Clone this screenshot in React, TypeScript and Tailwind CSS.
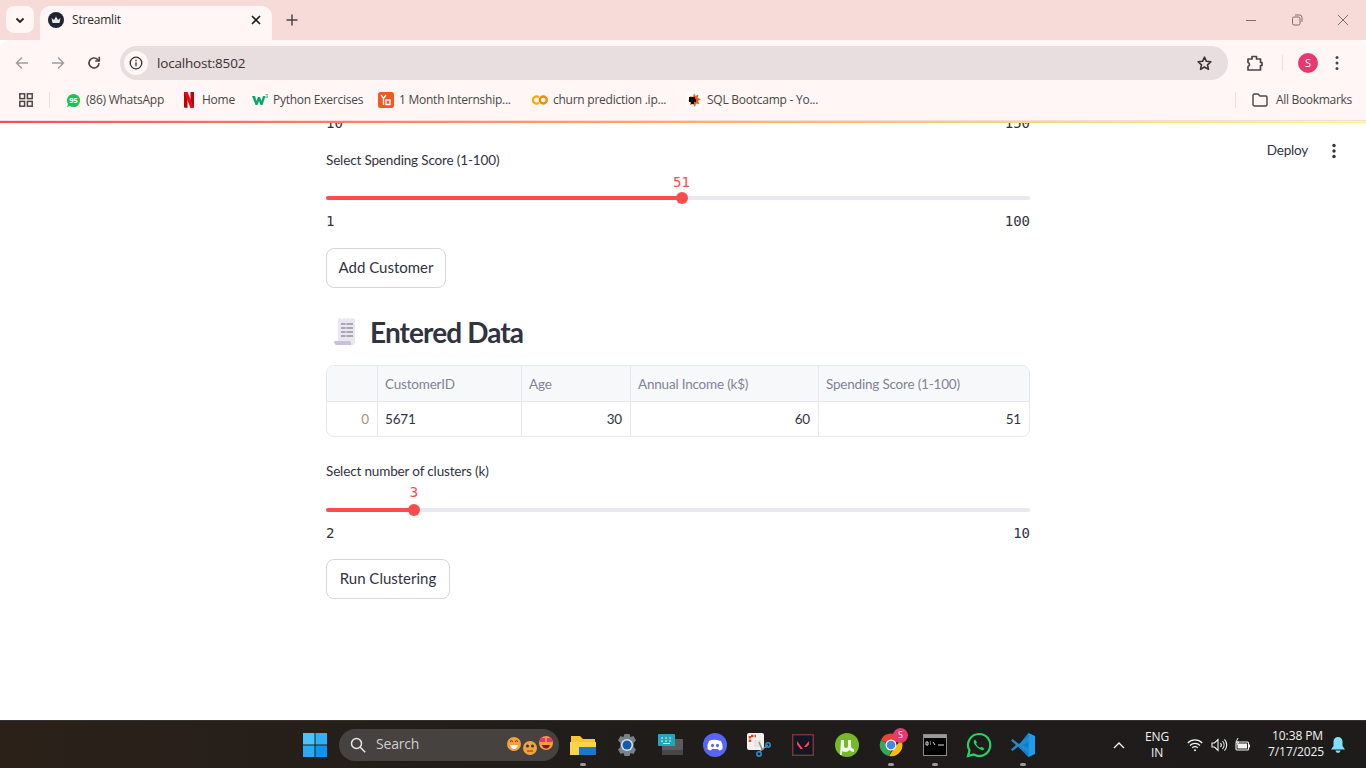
import React from "react";

const ui = { fontFamily: '"Open Sans", "Noto Sans", sans-serif' };
const st = { fontFamily: 'Lato, "Noto Sans", sans-serif' };
const mono = { fontFamily: '"DejaVu Sans Mono", "Liberation Mono", monospace' };

function Bookmark({ icon, label, w }: { icon: React.ReactNode; label: string; w: number }) {
  return (
    <div className="flex items-center shrink-0" style={{ width: w }}>
      <span className="w-4 h-4 flex items-center justify-center shrink-0">{icon}</span>
      <span className="ml-[5px] text-[12px] text-[#474747] whitespace-nowrap tracking-[-0.25px]">{label}</span>
    </div>
  );
}

function Slider({ label, value, pct, min, max, mt, gap, valueTop }: { label: string; value: string; pct: number; min: string; max: string; mt: string; gap: string; valueTop: string }) {
  return (
    <div className={mt}>
      <div className="h-[22px] text-[13.5px] leading-[24px] tracking-[-0.15px] text-[#31333f]" style={st}>{label}</div>
      <div className={`relative h-[4px] ${gap} rounded-full bg-[#e6e9ef]`}>
        <div className="h-full rounded-full bg-[#ff4b4b]" style={{ width: `${pct}%` }} />
        <div className="absolute top-[-4px] w-3 h-3 rounded-full bg-[#ff4b4b]" style={{ left: `calc(${pct}% - 6px)` }} />
        <div className={`absolute ${valueTop} w-10 text-center text-[14px] leading-[20px] text-[#ff4b4b]`} style={{ ...mono, left: `calc(${pct}% - 20px)` }}>{value}</div>
      </div>
      <div className="flex justify-between mt-[11px] text-[14px] leading-[20px] text-[#31333f]" style={mono}>
        <span>{min}</span>
        <span>{max}</span>
      </div>
    </div>
  );
}

function StButton({ children, w, mt }: { children: React.ReactNode; w: string; mt: string }) {
  return (
    <button className={`block h-10 pb-[2px] ${w} ${mt} rounded-lg border border-[#d5d6d9] bg-white text-[15px] text-[#31333f]`} style={st}>
      {children}
    </button>
  );
}

function Th({ w, children }: { w: string; children?: React.ReactNode }) {
  return <div className={`${w} shrink-0 h-full flex items-center pt-[2px] pl-[7px] pr-2 border-r border-[#e6e8ee] last:border-r-0 text-[13.5px] tracking-[-0.2px] text-[#808495]`}>{children}</div>;
}
function Td({ w, right, muted, children }: { w: string; right?: boolean; muted?: boolean; children?: React.ReactNode }) {
  return (
    <div className={`${w} shrink-0 h-full flex items-center pl-[7px] pr-2 border-r border-[#e6e8ee] last:border-r-0 text-[13.5px] tracking-[-0.2px] ${right ? "justify-end" : ""} ${muted ? "text-[#a0917f]" : "text-[#31333f]"}`}>
      {children}
    </div>
  );
}

function TaskIcon({ children, dot }: { children: React.ReactNode; dot?: boolean }) {
  return (
    <div className="relative w-11 h-12 flex items-center justify-center shrink-0">
      {children}
      {dot && <span className="absolute bottom-[3px] left-[19px] w-[6px] h-[3px] rounded-full bg-[#9a9a9a]" />}
    </div>
  );
}

export default function App() {
  return (
    <div className="relative w-[1366px] h-[768px] overflow-hidden flex flex-col bg-white" style={ui}>
      <div className="absolute z-10 top-[120px] left-0 right-0 h-[3px] border-t border-[#f7dbd8] bg-linear-to-r from-[#ff4b4b] to-[#fffd80]" />

      {/* Tab strip */}
      <div className="h-10 shrink-0 bg-[#f7dbd8] flex items-end">
        <div className="w-[28px] h-[27px] ml-[6px] mb-[7px] rounded-lg bg-[#fff6f5] flex items-center justify-center">
          <svg width="12" height="12" viewBox="0 0 12 12" fill="none" stroke="#1f1f1f" strokeWidth="1.8"><path d="M2.5 4.5 6 8l3.5-3.5" /></svg>
        </div>
        <div className="w-[232px] h-[34px] ml-[6px] pb-[6px] rounded-t-[10px] bg-[#fff6f5] flex items-center pl-[8px] pr-[10px]">
          <svg width="16" height="16" viewBox="0 0 16 16">
            <circle cx="8" cy="8" r="8" fill="#1f2430" />
            <path d="M3.5 6 6 8l2-3.5L10 8l2.500-2-1 5h-7z" fill="#e8e8e8" />
          </svg>
          <span className="ml-[8px] text-[12px] text-[#2a2a2a] tracking-[-0.2px]">Streamlit</span>
          <svg className="ml-auto" width="12" height="12" viewBox="0 0 12 12" stroke="#1f1f1f" strokeWidth="1.6"><path d="M2 2l8 8M10 2l-8 8" /></svg>
        </div>
        <div className="w-10 h-[34px] pb-[6px] flex items-center justify-center">
          <svg width="12" height="12" viewBox="0 0 12 12" stroke="#474747" strokeWidth="1.5"><path d="M6 .5v11M.5 6h11" /></svg>
        </div>
        <div className="ml-auto h-10 flex items-center">
          <div className="w-[46px] flex justify-center">
            <svg width="12" height="12" viewBox="0 0 12 12" stroke="#7d6f6e" strokeWidth="1"><path d="M1 6.500h10" /></svg>
          </div>
          <div className="w-[46px] flex justify-center">
            <svg width="12" height="12" viewBox="0 0 12 12" fill="none" stroke="#7d6f6e" strokeWidth="1"><rect x="1.500" y="3" width="7.500" height="8" rx="1.500" /><path d="M4 1h4.500A2.500 2.500 0 0 1 11 3.500V8" /></svg>
          </div>
          <div className="w-[46px] flex justify-center">
            <svg width="12" height="12" viewBox="0 0 12 12" stroke="#7d6f6e" strokeWidth="1"><path d="M1 1l10 10M11 1 1 11" /></svg>
          </div>
        </div>
      </div>

      {/* Toolbar */}
      <div className="h-[46px] shrink-0 bg-[#fff6f5] rounded-t-[8px] flex items-center">
        <div className="w-[44px] flex justify-center">
          <svg width="16" height="16" viewBox="0 0 16 16" fill="none" stroke="#a59b9a" strokeWidth="1.5"><path d="M14 8H2.500M8 2.500 2.500 8 8 13.500" /></svg>
        </div>
        <div className="w-[28px] flex justify-center">
          <svg width="16" height="16" viewBox="0 0 16 16" fill="none" stroke="#a59b9a" strokeWidth="1.5"><path d="M2 8h11.500M8 2.500 13.500 8 8 13.500" /></svg>
        </div>
        <div className="w-[44px] flex justify-center">
          <svg width="16" height="16" viewBox="0 0 16 16" fill="none" stroke="#4f4443" strokeWidth="1.600"><path d="M13 8a5 5 0 1 1-1.500-3.600L13 6" /><path d="M13.300 1.800V6H9.200" /></svg>
        </div>
        <div className="w-[1108px] h-[34px] ml-[4px] rounded-full bg-[#e8dddf] flex items-center pl-[4px] pr-[15px]">
          <span className="w-6 h-6 rounded-full bg-[#fff6f5] flex items-center justify-center">
            <svg width="14" height="14" viewBox="0 0 14 14" fill="none" stroke="#3c3130" strokeWidth="1.300"><circle cx="7" cy="7" r="5.800" /><path d="M7 6.200v4M7 3.800v1.400" /></svg>
          </span>
          <span className="ml-[9px] text-[13.500px] text-[#3c3130] tracking-[-0.2px]">localhost:8502</span>
          <svg className="ml-auto" width="17" height="17" viewBox="0 0 24 24" fill="none" stroke="#3c3130" strokeWidth="2.200" strokeLinejoin="round"><path d="m12 3 2.700 5.900 6.300.700-4.700 4.300 1.300 6.300L12 17l-5.600 3.200 1.300-6.300L3 9.600l6.300-.7z" /></svg>
        </div>
        <div className="w-[54px] flex justify-center">
          <svg width="18" height="18" viewBox="0 0 18 18" fill="none" stroke="#4f4443" strokeWidth="1.700" strokeLinejoin="round"><path d="M2 5h4V2.500h4.500V5h4v3.500H16v3h-1.500V16H2v-3.500c2-.5 2-3.500 0-4z" /></svg>
        </div>
        <div className="w-px h-4 bg-[#f7dbd8]" />
        <div className="w-[20px] h-[20px] ml-[15px] rounded-full bg-[#e8386f] flex items-center justify-center text-white text-[11px]">S</div>
        <div className="ml-[17px]">
          <svg width="4" height="16" viewBox="0 0 4 16" fill="#4f4443"><circle cx="2" cy="2.500" r="1.500" /><circle cx="2" cy="8" r="1.500" /><circle cx="2" cy="13.500" r="1.500" /></svg>
        </div>
      </div>

      {/* Bookmarks */}
      <div className="h-[36px] shrink-0 bg-[#fff6f5] flex items-center pb-[8px]">
        <div className="w-[52px] flex justify-center">
          <svg width="14" height="14" viewBox="0 0 14 14" fill="none" stroke="#4f4443" strokeWidth="1.500"><rect x=".8" y=".8" width="4.800" height="4.800" /><rect x="8.400" y=".8" width="4.800" height="4.800" /><rect x=".8" y="8.400" width="4.800" height="4.800" /><rect x="8.400" y="8.400" width="4.800" height="4.800" /></svg>
        </div>
        <div className="w-px h-4 bg-[#f7dbd8] -ml-[3px] mr-[15px]" />
        <Bookmark w={116} label="(86) WhatsApp" icon={
          <svg width="15" height="15" viewBox="0 0 16 16"><circle cx="8" cy="8" r="7" fill="#16c45a" /><path d="M1 15l1.500-4 2.500 2.500z" fill="#16c45a" /><text x="8" y="10.800" textAnchor="middle" fontSize="8" fontWeight="700" fill="#fff">95</text></svg>
        } />
        <Bookmark w={71} label="Home" icon={
          <svg width="12" height="16" viewBox="0 0 12 16"><path d="M1 0h3.500v16L1 15.500z" fill="#b1060f" /><path d="M7.500 0H11v15.500L7.500 16z" fill="#b1060f" /><path d="M1 0h3.500L11 15.500 7.500 16z" fill="#e50914" /></svg>
        } />
        <Bookmark w={126} label="Python Exercises" icon={
          <svg width="16" height="12" viewBox="0 0 16 12"><path d="M0 2h3l1.500 5L6 3h2l1.500 4L11 2h2.500L10.500 11h-2L7 7l-1.500 4h-2z" fill="#04aa6d" /><path d="M13.500.5h2v.6l-1 .9h1v1.500h-2" fill="none" stroke="#04aa6d" strokeWidth=".6" /></svg>
        } />
        <Bookmark w={154} label="1 Month Internship..." icon={
          <svg width="16" height="16" viewBox="0 0 16 16"><rect width="16" height="16" rx="2.500" fill="#f4581f" /><path d="M3 3l2.500 3.500L8 3M5.500 6.500V13M8 8h4v4.500H8z" fill="none" stroke="#fff" strokeWidth="1.300" /></svg>
        } />
        <Bookmark w={154} label="churn prediction .ip..." icon={
          <svg width="16" height="10" viewBox="0 0 16 10" fill="none" stroke="#f9ab00" strokeWidth="2.300"><path d="M7 2.300a3.600 3.600 0 1 0 0 5.400" /><circle cx="11.300" cy="5" r="3.500" stroke="#f58a07" /></svg>
        } />
        <Bookmark w={140} label="SQL Bootcamp - Yo..." icon={
          <svg width="16" height="16" viewBox="0 0 16 16"><rect width="16" height="16" fill="#fff" /><path d="M8 1l1.500 3 3-1.500L11.500 6 15 7l-3 2 1.500 3-3.500-.5L9 15l-2-3-3 1 .5-3L2 8l3-1-1-3 3 1z" fill="#f25a1d" /><path d="M3 5h6v2h1v3H8v2H5v-2H3z" fill="#111" /></svg>
        } />
        <div className="ml-auto flex items-center">
          <div className="w-px h-4 bg-[#f7dbd8] mr-[16px]" />
          <svg width="16" height="14" viewBox="0 0 16 14" fill="none" stroke="#4f4443" strokeWidth="1.400"><path d="M1 2.500A1.500 1.500 0 0 1 2.500 1h3.500L8 3h6A1.500 1.500 0 0 1 15 4.500v7a1.500 1.500 0 0 1-1.500 1.500h-11A1.500 1.500 0 0 1 1 11.500z" /></svg>
          <span className="ml-[8px] mr-[14px] text-[12px] text-[#474747] tracking-[-0.3px]">All Bookmarks</span>
        </div>
      </div>

      {/* Page */}
      <div className="relative flex-1 overflow-hidden bg-white">
        <div className="absolute top-[18px] right-[58px] text-[13.5px] tracking-[-0.2px] text-[#31333f]" style={st}>Deploy</div>
        <div className="absolute top-[21px] right-[30px]">
          <svg width="4" height="16" viewBox="0 0 4 16" fill="#31333f"><circle cx="2" cy="2.500" r="1.700" /><circle cx="2" cy="8" r="1.700" /><circle cx="2" cy="13.500" r="1.700" /></svg>
        </div>

        <div className="w-[704px] ml-[326px] -mt-[9px]" style={st}>
          <div className="flex justify-between h-[20px] text-[14px] leading-[20px] text-[#31333f]" style={mono}>
            <span>10</span>
            <span>150</span>
          </div>
          <Slider mt="mt-[15px]" gap="mt-[26px]" valueTop="top-[-24px]" label="Select Spending Score (1-100)" value="51" pct={50.5} min="1" max="100" />
          <StButton w="w-[120px]" mt="mt-[17px]">Add Customer</StButton>

          <div className="flex items-center h-[38px] mt-[25px]">
            <svg width="28" height="30" viewBox="0 0 28 30" className="ml-[5px]">
              <path d="M7 2l2-1 2 1 2-1 2 1 2-1 2 1 2-1 2 1 1-1v23q0 4-3 4H9q-2 0-2-2z" fill="#ebe7f1" />
              <path d="M3 24h16q1 0 1 4H6q-3 0-3-4z" fill="#c9bfe0" />
              <path d="M10 6h12v2H10zM10 10h12v2H10zM10 14h12v2H10zM10 18h12v2H10z" fill="#a8a5b5" />
              <path d="M15 6v14" stroke="#ebe7f1" strokeWidth=".8" />
            </svg>
            <h2 className="ml-[11px] text-[28px] font-bold text-[#31333f] tracking-[-0.9px]">Entered Data</h2>
          </div>

          <div className="mt-[14px] h-[72px] rounded-lg border border-[#e6e8ee] overflow-hidden">
            <div className="flex h-[36px] bg-[#f7f8fa] border-b border-[#e6e8ee]">
              <Th w="w-[51px]" />
              <Th w="w-[144px]">CustomerID</Th>
              <Th w="w-[109px]">Age</Th>
              <Th w="w-[188px]">Annual Income (k$)</Th>
              <Th w="flex-1">Spending Score (1-100)</Th>
            </div>
            <div className="flex h-[34px]">
              <Td w="w-[51px]" right muted>0</Td>
              <Td w="w-[144px]">5671</Td>
              <Td w="w-[109px]" right>30</Td>
              <Td w="w-[188px]" right>60</Td>
              <Td w="flex-1" right>51</Td>
            </div>
          </div>

          <Slider mt="mt-[22px]" gap="mt-[27px]" valueTop="top-[-26px]" label="Select number of clusters (k)" value="3" pct={12.5} min="2" max="10" />
          <StButton w="w-[124px]" mt="mt-[16px]">Run Clustering</StButton>
        </div>
      </div>

      {/* Taskbar */}
      <div className="h-12 shrink-0 border-t border-[#35322f] bg-linear-to-r from-[#2b2119] via-[#1f1c1a] to-[#1e1c1b] flex items-center text-white">
        <div className="w-11 ml-[293px] flex justify-center">
          <svg width="24" height="24" viewBox="0 0 24 24">
            <rect x="0" y="0" width="11.500" height="11.500" fill="#4cc2ff" />
            <rect x="12.500" y="0" width="11.500" height="11.500" fill="#2fb1fa" />
            <rect x="0" y="12.500" width="11.500" height="11.500" fill="#2aa9f5" />
            <rect x="12.500" y="12.500" width="11.500" height="11.500" fill="#0f93f0" />
          </svg>
        </div>
        <div className="w-[220px] h-8 ml-[2px] rounded-full bg-[#45423f] flex items-center pl-[11px]">
          <svg width="16" height="16" viewBox="0 0 16 16" fill="none" stroke="#e8e8e8" strokeWidth="1.500"><circle cx="6.500" cy="6.500" r="5" /><path d="m10.200 10.200 5 5" /></svg>
          <span className="ml-[10px] pb-[2px] text-[14px] text-[#cfcfcf] tracking-[-0.2px]">Search</span>
          <svg className="ml-auto mr-[5px]" width="48" height="24" viewBox="0 0 48 24">
            <circle cx="8" cy="11" r="7" fill="#f9a03c" /><path d="M4 12h8q-1 4-4 4t-4-4z" fill="#fff" /><path d="M4 8.500q1.500-1.500 3 0M9 8.500q1.500-1.500 3 0" stroke="#5b2a10" fill="none" />
            <circle cx="24" cy="15" r="7" fill="#f2a23f" /><circle cx="21.500" cy="13" r="1.500" fill="#333" /><circle cx="26.500" cy="13" r="1.500" fill="#333" /><path d="M21 18h6" stroke="#7a3c10" />
            <circle cx="40" cy="10" r="7" fill="#f99b3a" /><path d="M34 5h5v4h-5zM41 5h5v4h-5z" fill="#ee2f6a" /><path d="M36 12h8q-1 3.500-4 3.500T36 12z" fill="#7a1a24" />
          </svg>
        </div>
        <div className="ml-[2px] flex items-center">
          <TaskIcon dot>
            <svg width="26" height="24" viewBox="0 0 26 24"><path d="M1 3h9l3 3h12v16H1z" fill="#f9c633" /><rect x="0" y="9" width="26" height="13" fill="#fbd24e" /><rect x="9" y="14" width="17" height="8" fill="#1b78c9" /></svg>
          </TaskIcon>
          <TaskIcon>
            <svg width="24" height="24" viewBox="0 0 24 24"><path d="M9.500 1h5l1 3 3-1 2.500 4.500-2.300 2.200v4.600L21 16.500 18.500 21l-3-1-1 3h-5l-1-3-3 1L3 16.500l2.300-2.200V9.700L3 7.500 5.500 3l3 1z" fill="#78808a" /><circle cx="12" cy="12" r="6" fill="#dfe3e8" /><circle cx="12" cy="12" r="4.500" fill="#0f5cb0" /></svg>
          </TaskIcon>
          <TaskIcon>
            <svg width="26" height="24" viewBox="0 0 26 24"><rect x="4" y="6" width="21" height="16" rx="1" fill="#5c5c5c" /><rect x="4" y="17" width="21" height="5" fill="#474747" /><rect x="0" y="1" width="17" height="12" rx="1" fill="#22a6b8" /><path d="M3 5h2M7 5h2M11 5h2M3 8h2M7 8h2M11 8h2M5 10.500h7" stroke="#d7f4f7" /></svg>
          </TaskIcon>
          <TaskIcon>
            <svg width="24" height="24" viewBox="0 0 24 24"><circle cx="12" cy="12" r="12" fill="#5865f2" /><path d="M6 8q3-1.500 6-1.200T18 8q2 3.500 1.500 8-2 1.500-3.500 1.500l-1-1.500h-6l-1 1.500Q6.500 17.500 4.500 16 4 11.500 6 8z" fill="#fff" /><ellipse cx="9.500" cy="12.500" rx="1.500" ry="1.700" fill="#5865f2" /><ellipse cx="14.500" cy="12.500" rx="1.500" ry="1.700" fill="#5865f2" /></svg>
          </TaskIcon>
          <TaskIcon>
            <svg width="26" height="26" viewBox="0 0 26 26"><rect x="1" y="1" width="17" height="17" rx="2" fill="#f2f1ef" /><path d="M4 10V4h6" fill="none" stroke="#d9472b" strokeWidth="2.500" strokeDasharray="2.500 1" /><path d="M8 8h7v7H8" fill="#e4e4e4" /><path d="M13 10l3 7M22 13l-9 7" stroke="#8d8d8d" strokeWidth="1.500" /><circle cx="22" cy="13" r="2.200" fill="none" stroke="#1b95d8" strokeWidth="1.600" /><circle cx="13" cy="22" r="2.200" fill="none" stroke="#1b95d8" strokeWidth="1.600" /></svg>
          </TaskIcon>
          <TaskIcon>
            <svg width="22" height="22" viewBox="0 0 22 22"><rect x=".7" y=".7" width="20.600" height="20.600" fill="#101823" stroke="#84303a" strokeWidth="1.400" /><path d="M5 7l6 8H8.500L5 10.500zM17 7v3.500L14.500 13H12z" fill="#ff4655" /></svg>
          </TaskIcon>
          <TaskIcon>
            <svg width="24" height="24" viewBox="0 0 24 24"><circle cx="12" cy="12" r="12" fill="#76b82a" /><path d="M6 7h3v6q0 2 2 2t2-2V7h3v7q1 2 3 2v3q-3 0-4.500-2-1.500 2-4 2-2 0-3-1l-1 4H5z" fill="#f3f3f3" /></svg>
          </TaskIcon>
          <TaskIcon dot>
            <div className="relative w-6 h-6">
              <svg width="24" height="24" viewBox="0 0 24 24">
                <path d="M12 12 2 7a11 11 0 0 1 20 0z" fill="#ea4335" />
                <path d="M2 7a11 11 0 0 0 8 16l4-9z" fill="#34a853" />
                <path d="M22 7a11 11 0 0 1-12 16l6-9z" fill="#fbbc05" />
                <circle cx="12" cy="12" r="5.500" fill="#fff" />
                <circle cx="12" cy="12" r="4.300" fill="#4285f4" />
              </svg>
              <span className="absolute top-[-5px] right-[-5px] w-[15px] h-[15px] rounded-full bg-[#e8386f] flex items-center justify-center text-[9px] text-white">S</span>
            </div>
          </TaskIcon>
          <TaskIcon dot>
            <svg width="24" height="22" viewBox="0 0 24 22"><rect x=".5" y=".5" width="23" height="21" fill="#000" stroke="#8a8a8a" /><rect x="1" y="1" width="22" height="3" fill="#9a9a9a" /><path d="M3 8h2v3H3zM7 8h1M7 10h1M10 8l2 3M15 11h6" stroke="#d8d8d8" fill="none" /></svg>
          </TaskIcon>
          <TaskIcon>
            <svg width="26" height="26" viewBox="0 0 26 26" fill="none"><path d="M13 2a11 11 0 0 0-9.500 16.500L2 24l5.700-1.500A11 11 0 1 0 13 2z" stroke="#25d366" strokeWidth="2.200" /><path d="M9 7.500 7.800 9q-.6 2.500 3 6t6.200 3.200l1.500-1.400-3-2-1.500 1q-3-1.500-4-4l1-1.300z" fill="#25d366" /></svg>
          </TaskIcon>
          <TaskIcon dot>
            <svg width="26" height="26" viewBox="0 0 26 26"><path d="M18.500 1 25 4v18l-6.500 3L8 14.500z" fill="#1f9cf0" /><path d="M18.500 1v24L8 14z" fill="#0a7fd1" /><path d="M2.500 7 1 8.500 6 13l-5 4.500L2.500 19 9 14l9.500 7.500V16L12.500 13l6-3V4.500L9 12z" fill="#2489ca" /></svg>
          </TaskIcon>
        </div>

        <div className="ml-auto flex items-center">
          <svg width="12" height="8" viewBox="0 0 12 8" fill="none" stroke="#f2f2f2" strokeWidth="1.400"><path d="M1 7l5-5 5 5" /></svg>
          <div className="w-[24px] ml-[20px] flex flex-col items-center text-[12px] leading-[16px] text-[#f2f2f2] tracking-[-0.2px]">
            <span>ENG</span>
            <span>IN</span>
          </div>
          <svg className="ml-[18px]" width="16" height="14" viewBox="0 0 16 14" fill="none" stroke="#f2f2f2" strokeWidth="1.200"><path d="M.8 5a10 10 0 0 1 14.400 0M3 7.500a7 7 0 0 1 10 0M5.300 9.800a3.600 3.600 0 0 1 5.400 0" /><circle cx="8" cy="12.300" r="1" fill="#f2f2f2" stroke="none" /></svg>
          <svg className="ml-[8px]" width="17" height="14" viewBox="0 0 17 14" fill="none" stroke="#f2f2f2" strokeWidth="1.100"><path d="M1 5v4h2.500L7 12.500v-11L3.500 5z" /><path d="M9.500 5a3 3 0 0 1 0 4M11.500 3a6 6 0 0 1 0 8M13.500 1.300a8.500 8.500 0 0 1 0 11.400" /></svg>
          <svg className="ml-[7px]" width="16" height="14" viewBox="0 0 16 14" fill="none" stroke="#f2f2f2" strokeWidth="1.100"><rect x="1" y="4" width="12.500" height="8" rx="1" /><rect x="2.500" y="5.500" width="9.500" height="5" fill="#f2f2f2" stroke="none" /><path d="M14.500 6.500v3" /><path d="M3 0 1 4h2.500L2 7" strokeWidth="1" /></svg>
          <div className="w-[72px] ml-[1px] flex flex-col items-end text-[12px] leading-[16px] text-[#f2f2f2] tracking-[-0.1px] -mt-px">
            <span className="mr-px">10:38 PM</span>
            <span>7/17/2025</span>
          </div>
          <svg className="ml-[7px] mr-[21px]" width="14" height="16" viewBox="0 0 14 16" fill="#7fe0fb"><path d="M7 0a4.500 4.500 0 0 1 4.500 4.500V9l2.500 3.500H0L2.500 9V4.500A4.500 4.500 0 0 1 7 0z" /><path d="M4.500 13.500h5a2.500 2.500 0 0 1-5 0z" /></svg>
        </div>
      </div>
    </div>
  );
}
